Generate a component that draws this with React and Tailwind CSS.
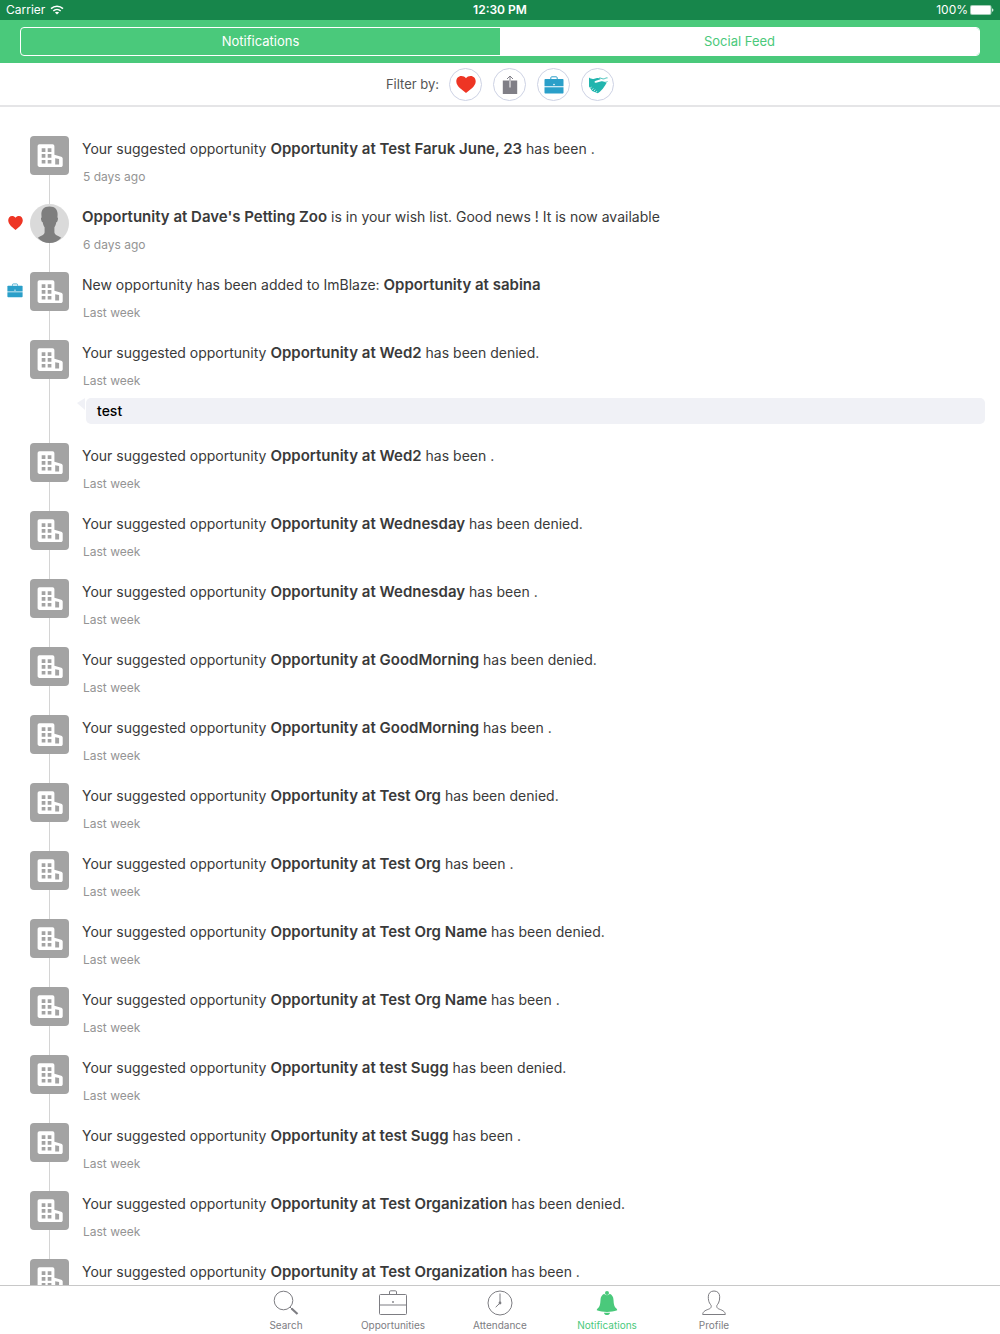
import React, { useState } from "react";
import clsx from "clsx";

const notifications = [
  { before: "Your suggested opportunity ", name: "Opportunity at Test Faruk June, 23", after: " has been .", date: "5 days ago" },
  {
    before: "",
    name: "Opportunity at Dave's Petting Zoo",
    after: " is in your wish list. Good news ! It is now available",
    date: "6 days ago",
    kind: "wish",
    person: true,
  },
  { before: "New opportunity has been added to ImBlaze: ", name: "Opportunity at sabina", after: "", date: "Last week", kind: "job" },
  { before: "Your suggested opportunity ", name: "Opportunity at Wed2", after: " has been denied.", date: "Last week", comment: "test" },
  { before: "Your suggested opportunity ", name: "Opportunity at Wed2", after: " has been .", date: "Last week" },
  { before: "Your suggested opportunity ", name: "Opportunity at Wednesday", after: " has been denied.", date: "Last week" },
  { before: "Your suggested opportunity ", name: "Opportunity at Wednesday", after: " has been .", date: "Last week" },
  { before: "Your suggested opportunity ", name: "Opportunity at GoodMorning", after: " has been denied.", date: "Last week" },
  { before: "Your suggested opportunity ", name: "Opportunity at GoodMorning", after: " has been .", date: "Last week" },
  { before: "Your suggested opportunity ", name: "Opportunity at Test Org", after: " has been denied.", date: "Last week" },
  { before: "Your suggested opportunity ", name: "Opportunity at Test Org", after: " has been .", date: "Last week" },
  { before: "Your suggested opportunity ", name: "Opportunity at Test Org Name", after: " has been denied.", date: "Last week" },
  { before: "Your suggested opportunity ", name: "Opportunity at Test Org Name", after: " has been .", date: "Last week" },
  { before: "Your suggested opportunity ", name: "Opportunity at test Sugg", after: " has been denied.", date: "Last week" },
  { before: "Your suggested opportunity ", name: "Opportunity at test Sugg", after: " has been .", date: "Last week" },
  { before: "Your suggested opportunity ", name: "Opportunity at Test Organization", after: " has been denied.", date: "Last week" },
  { before: "Your suggested opportunity ", name: "Opportunity at Test Organization", after: " has been ." },
];

const WifiIcon = () => (
  <svg viewBox="0 0 14 10" className="h-[10px] w-[14px]" fill="none" stroke="currentColor" strokeWidth="1.5">
    <path d="M1 3.6C4.4.3 9.6.3 13 3.6" />
    <path d="M3.3 6C5.4 4 8.6 4 10.7 6" />
    <path d="M7 9.6 4.9 7.5c1.2-1.1 3-1.1 4.2 0z" fill="currentColor" stroke="none" />
  </svg>
);

const BatteryIcon = () => (
  <svg viewBox="0 0 24 10" className="h-[10px] w-[24px]" fill="currentColor">
    <rect width="21.5" height="10" rx="2" opacity=".6" />
    <rect x="1" y="1" width="19.5" height="8" rx="1" />
    <path d="M22.2 3.2c1.6.4 1.6 3.2 0 3.6z" />
  </svg>
);

const HeartIcon = ({ className }) => (
  <svg viewBox="0 0 20 17" preserveAspectRatio="none" className={className} fill="#ee3524">
    <path d="M10 2.2C8.9.8 7.3 0 5.400 0 2.400 0 .300 2.300.300 5.300c0 2.700 1.400 4.700 3.500 6.700L10 17l6.200-5c2.100-2 3.500-4 3.500-6.700C19.700 2.300 17.600 0 14.600 0c-1.900 0-3.500.8-4.600 2.200z" />
  </svg>
);

const ShareIcon = () => (
  <svg viewBox="0 0 16 20" className="h-[20px] w-[16px]" fill="none">
    <path d="M.8 5.500h14.400v13.500H.8z" fill="#807f87" />
    <path d="M8 5.500v7" stroke="#fff" strokeWidth="1" />
    <path d="M8 5.500V1.500M5 4l3-3 3 3" stroke="#807f87" strokeWidth="1" />
  </svg>
);

const JobIcon = ({ className }) => (
  <svg viewBox="0 0 20 18" className={className} fill="#2a9fc9">
    <path d="M6.800 3V1.800C6.800 1.200 7.200.8 7.800.8h4.400c.6 0 1 .4 1 1V3" fill="none" stroke="#2a9fc9" strokeWidth="1" />
    <path d="M1.500 3h17c.6 0 1 .4 1 1v6.300h-19V4c0-.6.4-1 1-1z" />
    <path d="M.5 11.200h19v5.300c0 .6-.4 1-1 1h-17c-.6 0-1-.4-1-1z" />
    <circle cx="10" cy="8.600" r=".8" fill="#fff" />
  </svg>
);

const HandshakeIcon = () => (
  <svg viewBox="0 0 20 18" className="h-[18px] w-[20px]" fill="none">
    <path d="M1 1.500c1.600 1.200 3 1.600 4.500 1.400L9 2.100c1.500-.2 2.600.3 3.600 1.100L7.800 4.700C5.900 5.400 6.300 7 8 6.700l5.500-1.400c1.700-.3 3.400.6 5 1.800l-1.300 2.200-2.400 3.500-2.900 3-2.100 1.500-5.600-2.400L1 10.500z" fill="#22b5ae" />
    <path d="M11 2.200c1.600-.6 2.700.7 4.400.7 1.600 0 2.400-1.300 4.100-1" stroke="#22b5ae" strokeWidth=".9" />
    <path d="M16.500 6.300c1.200.2 2.100-.2 3-.8" stroke="#22b5ae" strokeWidth=".8" />
    <path d="m2.400 12.200 1-1.400M4.300 13.800l1-1.400M6.200 15l1-1.400M8.200 16.200l.8-1.200" stroke="#fff" strokeWidth=".7" />
  </svg>
);

const BuildingAvatar = () => (
  <svg viewBox="0 0 39 39" className="size-[39px]">
    <rect width="39" height="39" rx="4" fill="#a3a3a3" />
    <path d="M9.500 8.300h13c1.100 0 1.900.8 1.900 1.900v8.500l6.800 2c.9.300 1.500.9 1.500 1.800v6.700c0 1.100-.8 1.800-1.900 1.800H9.500c-1.100 0-1.900-.8-1.900-1.900V10.200c0-1.100.8-1.900 1.900-1.900z" fill="#fff" />
    <path d="M11.700 12.300h3.700V16h-3.700zM17.700 12.300h3.700V16h-3.700zM11.700 18.100h3.700v3.700h-3.700zM17.700 18.100h3.700v3.700h-3.700zM11.700 23.900h3.700v3.600h-3.700zM17.700 23.900h3.700v3.600h-3.700zM25.200 22.300l3.900.8v5.500h-3.900z" fill="#a3a3a3" />
  </svg>
);

const PersonAvatar = () => (
  <svg viewBox="0 0 39 39" className="size-[39px]">
    <circle cx="19.500" cy="19.500" r="19.500" fill="#dadada" />
    <path d="M19.500 2.600c-5.800 0-8.300 3.300-8.100 8.400l.2 2.500c-.8.200-.7 1.300-.3 2.800.3 1.200.7 1.900 1.400 1.900.4 2 .9 3.600 1.900 5v5.300c-.6 2.800-4.200 3.600-6.900 5.200 3.200 3.400 7.200 5.300 11.800 5.300s8.600-1.900 11.800-5.300c-2.700-1.600-6.300-2.400-6.900-5.200v-5.300c1-1.400 1.500-3 1.900-5 .7 0 1.100-.7 1.400-1.900.4-1.500.5-2.600-.3-2.800l.2-2.500c.2-5.100-2.300-8.400-8.100-8.400z" fill="#7e7e7e" />
  </svg>
);

const SearchTabIcon = () => (
  <svg viewBox="0 0 28 26" className="h-[26px] w-[28px]" fill="none" stroke="currentColor">
    <circle cx="11.500" cy="10.500" r="9.300" />
    <path d="m18 17 2 2" />
    <path d="m19.500 18.500 6 5.500" strokeWidth="2.200" />
  </svg>
);

const BriefcaseTabIcon = () => (
  <svg viewBox="0 0 28 26" className="h-[26px] w-[28px]" fill="none" stroke="currentColor">
    <path d="M10.500 4.500V2c0-.8.400-1.200 1.200-1.200h4.600c.8 0 1.200.4 1.200 1.200v2.500" />
    <rect x=".5" y="4.500" width="27" height="20" rx="1" />
    <path d="M.5 15h27" />
    <circle cx="14" cy="12" r=".9" fill="currentColor" stroke="none" />
  </svg>
);

const ClockTabIcon = () => (
  <svg viewBox="0 0 28 26" className="h-[26px] w-[28px]" fill="none" stroke="currentColor">
    <circle cx="14" cy="13" r="12" />
    <path d="M14 3.500V13l-4.300 4.200" />
    <circle cx="14" cy="13" r="1.400" fill="currentColor" stroke="none" />
  </svg>
);

const BellTabIcon = () => (
  <svg viewBox="0 0 28 26" className="h-[26px] w-[28px]" fill="currentColor">
    <circle cx="14" cy="2.900" r="2" />
    <path d="M11.200 3.800c.8 1.900 4.800 1.900 5.600 0 2.400 1.100 3.600 3.200 3.700 6.200.2 4.500.8 6.700 2.600 8.200.9.800 1.100 1.400 1.100 2-3.300 1.300-6.500 1.700-10.200 1.700s-6.900-.4-10.200-1.700c0-.6.200-1.200 1.100-2 1.800-1.500 2.400-3.700 2.600-8.200.1-3 1.300-5.100 3.700-6.200z" />
    <path d="M10.900 22.700c2 .2 4.200.2 6.200 0-.4 1.500-1.500 2.300-3.100 2.300s-2.700-.8-3.100-2.300z" />
  </svg>
);

const ProfileTabIcon = () => (
  <svg viewBox="0 0 28 26" className="h-[26px] w-[28px]" fill="none" stroke="currentColor">
    <path d="M14 1C10.500 1 8.300 3.300 8.300 6.800c0 2.300.3 4.500 1.200 6.200.5 1 1.300 1.700 1.600 2.400.5 1.400-.2 2.800-1.800 3.500-2.500 1-6.600 2.100-6.600 5.600h22.600c0-3.500-4.100-4.600-6.600-5.600-1.600-.7-2.300-2.100-1.800-3.500.3-.7 1.100-1.400 1.600-2.400.9-1.700 1.200-3.900 1.200-6.200C19.700 3.300 17.500 1 14 1z" />
  </svg>
);

const filters = [
  { label: "Wish list", icon: <HeartIcon className="h-[17px] w-[20px]" /> },
  { label: "Suggestions", icon: <ShareIcon /> },
  { label: "New opportunities", icon: <JobIcon className="h-[18px] w-[20px]" /> },
  { label: "Internships", icon: <HandshakeIcon /> },
];

const tabs = [
  { label: "Search", Icon: SearchTabIcon },
  { label: "Opportunities", Icon: BriefcaseTabIcon },
  { label: "Attendance", Icon: ClockTabIcon },
  { label: "Notifications", Icon: BellTabIcon, active: true },
  { label: "Profile", Icon: ProfileTabIcon },
];

const NotificationRow = ({ item }) => (
  <li className="flex">
    <div className="flex h-[37px] w-[30px] shrink-0 items-center justify-center">
      {item.kind === "wish" && <HeartIcon className="h-[14px] w-[15px]" />}
      {item.kind === "job" && <JobIcon className="h-[15px] w-[16px]" />}
    </div>
    <div className="flex w-[39px] shrink-0 flex-col items-center">
      {item.person ? <PersonAvatar /> : <BuildingAvatar />}
      <div className="w-px flex-1 bg-[#d4d4d4]" />
    </div>
    <div className="min-w-0 flex-1 pt-[3px] pr-[15px] pb-[19px] pl-[13px]">
      <p className="text-[14px] leading-5 text-[#3a3a3a]">
        {item.before}
        <strong className="text-[15px] font-semibold">{item.name}</strong>
        {item.after}
      </p>
      {item.date && <p className="mt-[10px] pl-px text-[12px] leading-4 text-[#949494]">{item.date}</p>}
      {item.comment && (
        <div className="mt-[9px] flex items-start">
          <svg viewBox="0 0 8 12" className="-ml-[5px] h-[12px] w-[8px] shrink-0" fill="#f0f1f6">
            <path d="M8 0v12L0 5z" />
          </svg>
          <p className="ml-px flex-1 rounded-[5px] bg-[#f0f1f6] px-[11px] py-[3px] text-[14px] leading-5 font-medium text-black">
            {item.comment}
          </p>
        </div>
      )}
    </div>
  </li>
);

export default function App() {
  const [view, setView] = useState("Notifications");

  return (
    <div className="flex h-screen flex-col bg-white font-['Inter','Liberation_Sans',sans-serif]">
      <div className="grid h-5 shrink-0 grid-cols-3 items-center bg-[#17864b] px-[6px] text-[12px] leading-4 text-white">
        <div className="flex items-center gap-[5px]">
          <span>Carrier</span>
          <WifiIcon />
        </div>
        <span className="text-center font-semibold">12:30 PM</span>
        <div className="flex items-center justify-end gap-[2px]">
          <span>100%</span>
          <BatteryIcon />
        </div>
      </div>

      <header className="shrink-0 bg-[#4ac97b] px-5 py-[7px]">
        <div className="flex h-[29px] overflow-hidden rounded-[4px] border border-white">
          {["Notifications", "Social Feed"].map((name) => (
            <button
              key={name}
              type="button"
              onClick={() => setView(name)}
              className={clsx("flex-1 text-[13px]", view === name ? "text-white" : "bg-white text-[#4ac97b]")}
            >
              {name}
            </button>
          ))}
        </div>
      </header>

      <div className="flex shrink-0 items-center justify-center gap-[10px] border-b-2 border-[#e5e5e7] pt-[5px] pb-1">
        <span className="text-[13px] text-[#555]">Filter by:</span>
        <div className="flex gap-[11px]">
          {filters.map((filter) => (
            <button
              key={filter.label}
              type="button"
              aria-label={filter.label}
              className="flex size-[33px] items-center justify-center rounded-full border border-[#cdd2e4]"
            >
              {filter.icon}
            </button>
          ))}
        </div>
      </div>

      <main className="min-h-0 flex-1 overflow-hidden pt-[29px]">
        <ul>
          {notifications.map((item, index) => (
            <NotificationRow key={index} item={item} />
          ))}
        </ul>
      </main>

      <nav className="flex shrink-0 justify-center border-t border-[#c8c8c8] bg-white pt-1 pb-px">
        {tabs.map(({ label, Icon, active }) => (
          <a
            key={label}
            href="#"
            className={clsx("flex w-[107px] flex-col items-center gap-px", active ? "text-[#4ac97b]" : "text-[#7d7d82]")}
          >
            <Icon />
            <span className="text-[10px] leading-4">{label}</span>
          </a>
        ))}
      </nav>
    </div>
  );
}
